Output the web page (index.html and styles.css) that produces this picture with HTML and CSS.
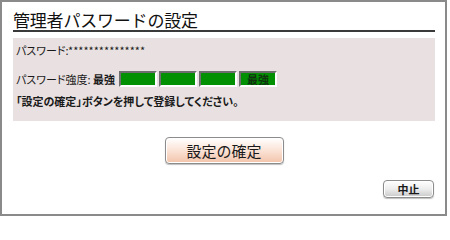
FILE: index.html
```html
<!DOCTYPE html>
<html lang="ja">
<head>
<meta charset="utf-8">
<link rel="stylesheet" href="styles.css">
</head>
<body>
<div class="frame">
  <h1 class="title">管理者パスワードの設定</h1>
  <div class="panel">
    <div class="row row-pass">パスワード:***************</div>
    <div class="row row-strength">
      <span class="label">パスワード強度: <b>最強</b></span>
      <div class="bars">
        <span class="bar"></span>
        <span class="bar"></span>
        <span class="bar"></span>
        <span class="bar bar-text">最強</span>
      </div>
    </div>
    <div class="row row-note">「設定の確定」ボタンを押して登録してください。</div>
  </div>
  <div class="actions">
    <button class="btn btn-confirm">設定の確定</button>
  </div>
  <div class="footer">
    <button class="btn btn-cancel">中止</button>
  </div>
</div>
</body>
</html>
```

FILE: styles.css
```css
html, body {
  margin: 0;
  padding: 0;
  background: #ffffff;
}
body {
  font-family: "Noto Sans CJK JP", "Noto Sans", sans-serif;
  color: #1a1a1a;
}
.frame {
  box-sizing: border-box;
  width: 447px;
  height: 216px;
  border: 2px solid #8a8a8a;
  padding: 0 10px 0 11px;
  display: flex;
  flex-direction: column;
}
.title {
  margin: 8px 0 0 0;
  font-size: 17px;
  font-weight: normal;
  line-height: 20px;
  height: 20px;
  border-bottom: 2px solid #3a3a3a;
  color: #111;
  letter-spacing: -0.2px;
}
.panel {
  margin-top: 6px;
  height: 83px;
  box-sizing: border-box;
  background: #e9e1e1;
  padding: 4px 0 0 3px;
  font-size: 11px;
  font-feature-settings: "palt";
}
.row {
  line-height: 16px;
  height: 16px;
  white-space: nowrap;
}
.row-strength {
  margin-top: 13px;
  display: flex;
  align-items: center;
}
.label {
  width: 103px;
  flex: none;
}
.label b {
  font-weight: bold;
}
.bars {
  display: flex;
  gap: 2px;
}
.bar {
  box-sizing: border-box;
  width: 38px;
  height: 16px;
  background: #019001;
  border: 2px solid;
  border-color: #6e6e6e #ffffff #ffffff #6e6e6e;
}
.bar-text {
  font-weight: bold;
  font-size: 11px;
  line-height: 12px;
  text-align: center;
  color: #103010;
}
.row-note {
  margin-top: 6px;
  font-weight: bold;
}
.actions {
  display: flex;
  justify-content: center;
  margin-top: 16px;
}
.btn {
  font-family: "Noto Sans CJK JP", "Noto Sans", sans-serif;
  color: #1a1a1a;
  padding: 0;
  cursor: pointer;
  border: 1px solid #8c8c8c;
  border-radius: 4px;
  box-shadow: inset 0 0 0 1px #ffffff, 0 1px 1px rgba(0,0,0,0.25);
}
.btn-confirm {
  width: 119px;
  height: 27px;
  font-size: 15px;
  background: linear-gradient(#ffffff 0%, #fbe6da 45%, #f3c3aa 100%);
}
.footer {
  display: flex;
  justify-content: flex-end;
  margin-top: 16px;
  padding-right: 1px;
}
.btn-cancel {
  width: 51px;
  height: 18px;
  font-size: 11px;
  font-weight: bold;
  line-height: 14px;
  background: linear-gradient(#ffffff 0%, #ededed 50%, #c9c9c9 100%);
}
```
